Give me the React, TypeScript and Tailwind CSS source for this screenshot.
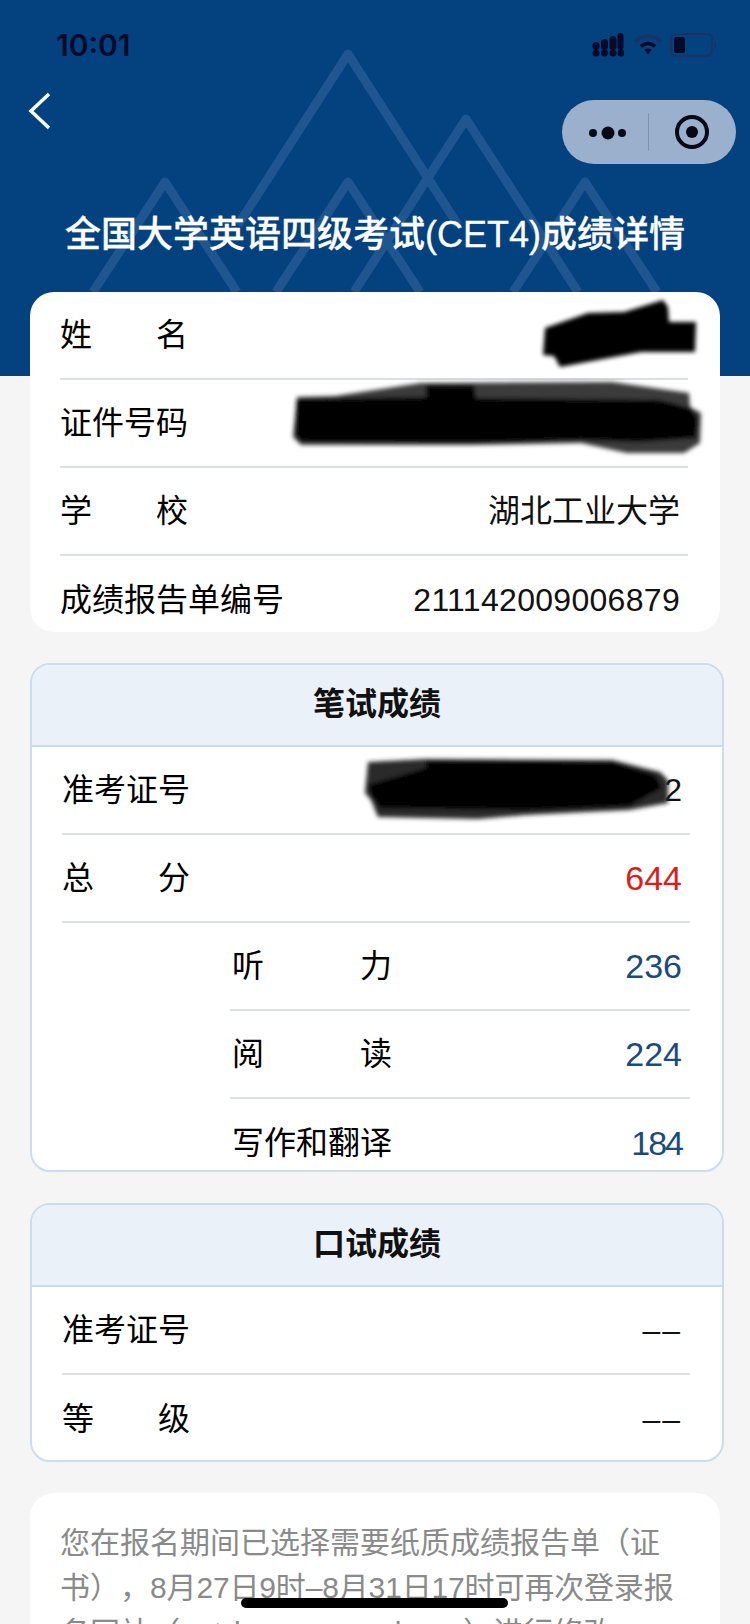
const font = '[font-family:"Liberation_Sans","Noto_Sans_CJK_SC",sans-serif]';

function Label({ chars, sub }: { chars: string[]; sub?: boolean }) {
  return (
    <span className={`flex justify-between ${sub ? 'w-[160px]' : chars.length === 7 ? 'w-[224px]' : 'w-[128px]'}`}>
      {chars.map((c, i) => (
        <span key={i}>{c}</span>
      ))}
    </span>
  );
}

function Row({
  chars,
  value,
  color = 'text-[#111]',
  sub,
  last,
}: {
  chars: string[];
  value?: string;
  color?: string;
  sub?: boolean;
  last?: boolean;
}) {
  return (
    <div
      className={`flex h-[88px] shrink-0 items-center justify-between pr-[8px] ${
        last ? '' : 'border-b-2 border-[#dcdfe3]'
      } ${sub ? 'ml-[168px] pl-[2px]' : ''}`}
    >
      <Label chars={chars} sub={sub} />
      <span className={color}>{value}</span>
    </div>
  );
}

function ScoreCard({ title, height, children }: { title: string; height: string; children: React.ReactNode }) {
  return (
    <section className={`ml-[30px] w-[694px] overflow-hidden rounded-[20px] border-2 border-[#cbdcec] bg-white ${height}`}>
      <h2 className="flex h-[82px] items-center justify-center border-b-2 border-[#cbdcec] bg-[#ebf1f8] pb-[3px] text-[32px] font-semibold text-[#111]">
        {title}
      </h2>
      <div className="pr-[32px] pl-[30px]">{children}</div>
    </section>
  );
}

function StatusIcons() {
  return (
    <div className="flex items-center">
      <svg width="32" height="26" viewBox="0 0 32 26" fill="#050a28" className="mr-[9px]">
        <circle cx="4" cy="21" r="3.5" />
        <rect x="0.5" y="10" width="7" height="8" rx="3.5" />
        <circle cx="12.5" cy="21" r="3.5" />
        <rect x="9" y="7" width="7" height="11" rx="3.5" />
        <circle cx="21" cy="21" r="3.5" />
        <rect x="17.5" y="4" width="7" height="14" rx="3.5" />
        <circle cx="29" cy="21" r="3.5" />
        <rect x="25.5" y="1" width="6" height="17" rx="3" />
      </svg>
      <svg width="30" height="22" viewBox="0 0 30 22" fill="none" className="mr-[7px]">
        <path d="M2 8 C10 0 20 0 28 8" stroke="#1c3260" strokeWidth="3.5" />
        <path d="M8 12.5 C12 8.5 18 8.5 22 12.5" stroke="#050a28" strokeWidth="3.5" />
        <path d="M11.5 16 L15 20.5 L18.5 16 C16.5 14 13.5 14 11.5 16 Z" fill="#050a28" />
      </svg>
      <svg width="48" height="24" viewBox="0 0 48 24" fill="none">
        <rect x="1" y="1" width="41" height="22" rx="5" stroke="#1c3260" strokeWidth="2" />
        <rect x="4" y="4" width="11" height="16" rx="2.5" fill="#050a28" />
        <path d="M44 8 C46.5 9 46.5 15 44 16 Z" fill="#1c3260" />
      </svg>
    </div>
  );
}

function Capsule() {
  return (
    <div className="mt-[8px] flex h-[64px] w-[174px] items-center rounded-full bg-[#9bb0cc]">
      <svg width="86" height="64" viewBox="0 0 86 64" className="shrink-0">
        <circle cx="31" cy="33" r="4" fill="#050a14" />
        <circle cx="46" cy="33" r="6.5" fill="#050a14" />
        <circle cx="60" cy="33" r="4" fill="#050a14" />
      </svg>
      <div className="h-[38px] w-px bg-[#7d92ae]" />
      <svg width="87" height="64" viewBox="0 0 87 64" className="shrink-0">
        <circle cx="43" cy="32" r="15" fill="none" stroke="#050a14" strokeWidth="4" />
        <circle cx="43" cy="32" r="6" fill="#050a14" />
      </svg>
    </div>
  );
}

function Mountains() {
  return (
    <svg width="750" height="376" viewBox="0 0 750 376" fill="none" className="absolute top-0 left-0">
      <g stroke="#1f5690" strokeWidth="9" strokeLinejoin="round">
        <path d="M238 225 L348 54 L458 225" />
        <path d="M354 292 L466 119 L578 292" />
        <path d="M93 292 L165 182 L237 292" />
        <path d="M276 292 L348 182 L420 292" />
        <path d="M513 292 L585 182 L657 292" />
      </g>
    </svg>
  );
}

function Redactions() {
  return (
    <svg width="750" height="1624" viewBox="0 0 750 1624" className="pointer-events-none absolute top-0 left-0">
      <defs>
        <filter id="soft">
          <feGaussianBlur stdDeviation="2" />
        </filter>
      </defs>
      <g filter="url(#soft)">
        <path
          d="M545 328 L588 313 L624 312 L663 300 L668 307 L669 322 L696 322 L695 352 L641 352 L560 367 L554 356 L543 355 Z"
          fill="#050505"
        />
        <path
          d="M297 397 L335 396 L421 383 L612 382 L689 393 L690 407 L701 413 L700 443 L684 453 L627 453 L581 443 L471 445 L301 445 L293 437 Z"
          fill="#3a3a3a"
        />
        <path
          d="M297 399 L426 397 L426 385 L474 385 L476 398 L660 400 L690 408 L698 418 L696 438 L640 442 L581 440 L471 443 L301 442 L295 435 Z"
          fill="#000"
        />
        <path
          d="M368 762 L426 759 L612 760 L660 772 L668 780 L668 803 L629 810 L526 815 L478 819 L378 817 L371 800 L365 793 Z"
          fill="#2a2a2a"
        />
        <path
          d="M426 761 L612 762 L655 775 L662 788 L640 800 L629 806 L526 810 L380 808 L371 795 L368 785 L426 768 Z"
          fill="#000"
        />
      </g>
    </svg>
  );
}

export default function App() {
  return (
    <div className={`relative h-[1624px] w-[750px] overflow-hidden bg-[#f5f5f5] text-[32px] ${font}`}>
      <header className="relative h-[376px] bg-[#03417f] pt-[15px]">
        <Mountains />
        <div className="relative">
          <div className="flex h-[60px] items-center justify-between pr-[32px] pl-[56px]">
            <span className="font-['Inter',sans-serif] text-[30px] leading-none font-semibold text-[#050a28]">10:01</span>
            <StatusIcons />
          </div>
          <div className="mt-[17px] flex items-start justify-between pr-[14px] pl-[27px]">
            <svg width="26" height="38" viewBox="0 0 26 38" fill="none">
              <path d="M22 2 L4 19 L22 36" stroke="#fff" strokeWidth="3.5" />
            </svg>
            <Capsule />
          </div>
          <h1 className="mt-[46px] text-center text-[36px] leading-[50px] font-medium text-white [-webkit-text-stroke:0.3px_white]">
            全国大学英语四级考试(CET4)成绩详情
          </h1>
        </div>
      </header>

      <main className="-mt-[84px] flex flex-col gap-[31px]">
        <section className="relative ml-[30px] h-[340px] w-[690px] overflow-hidden rounded-[24px] bg-white pr-[32px] pl-[30px] leading-none">
          <Row chars={['姓', '名']} />
          <Row chars={['证', '件', '号', '码']} />
          <Row chars={['学', '校']} value="湖北工业大学" />
          <Row chars={['成', '绩', '报', '告', '单', '编', '号']} value="211142009006879" color="text-[#111] tracking-[0.3px]" last />
        </section>

        <ScoreCard title="笔试成绩" height="h-[509px]">
          <Row chars={['准', '考', '证', '号']} value="2" />
          <Row chars={['总', '分']} value="644" color="text-[34px] text-[#e01b1b]" />
          <Row chars={['听', '力']} value="236" color="text-[34px] text-[#1c4a7d]" sub />
          <Row chars={['阅', '读']} value="224" color="text-[34px] text-[#1c4a7d]" sub />
          <Row chars={['写', '作', '和', '翻', '译']} value="184" color="text-[34px] tracking-[-2px] text-[#1c4a7d]" sub last />
        </ScoreCard>

        <ScoreCard title="口试成绩" height="h-[259px]">
          <Row chars={['准', '考', '证', '号']} value="––" color="text-[#111] tracking-[2px]" />
          <Row chars={['等', '级']} value="––" color="text-[#111] tracking-[2px]" last />
        </ScoreCard>

        <section className="ml-[30px] w-[690px] rounded-[24px] bg-white px-[30px] pt-[27px] pb-[30px] text-[30px] leading-[45px] text-[#8a8a8a] [text-spacing-trim:space-all]">
          您在报名期间已选择需要纸质成绩报告单（证书），<span className="tracking-[-0.15px]">8月27日9时–8月31日17时可再次登录报</span>名网站（<span className="tracking-[1px]">cet-bm.neea.edu.cn</span>）进行修改。
        </section>
      </main>

      <Redactions />
      <div className="absolute top-[1598px] left-[241px] h-[10px] w-[267px] rounded-full bg-black" />
    </div>
  );
}
